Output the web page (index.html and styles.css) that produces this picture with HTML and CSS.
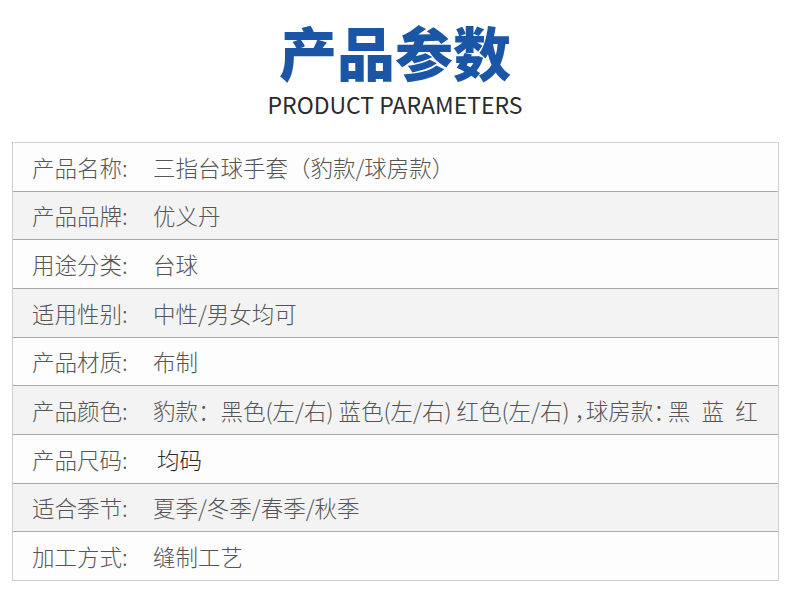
FILE: index.html
```html
<!DOCTYPE html>
<html lang="zh-CN">
<head>
<meta charset="utf-8">
<title>产品参数</title>
<link rel="stylesheet" href="styles.css">
</head>
<body>
<div class="page">
  <header class="heading">
    <h1 class="title">产品参数</h1>
    <p class="subtitle">PRODUCT PARAMETERS</p>
  </header>
  <div class="params">
    <div class="row"><span class="label">产品名称:</span><span class="value">三指台球手套（豹款/球房款）</span></div>
    <div class="row alt"><span class="label">产品品牌:</span><span class="value">优义丹</span></div>
    <div class="row"><span class="label">用途分类:</span><span class="value">台球</span></div>
    <div class="row alt"><span class="label">适用性别:</span><span class="value">中性/男女均可</span></div>
    <div class="row"><span class="label">产品材质:</span><span class="value">布制</span></div>
    <div class="row alt"><span class="label">产品颜色:</span><span class="value">豹款：黑色(左/右) 蓝色(左/右) 红色(左/右) <span class="half">，</span>球房款<span class="tight">：</span>黑&ensp;蓝&ensp;红</span></div>
    <div class="row"><span class="label">产品尺码:</span><span class="value dark">均码</span></div>
    <div class="row alt"><span class="label">适合季节:</span><span class="value">夏季/冬季/春季/秋季</span></div>
    <div class="row"><span class="label">加工方式:</span><span class="value">缝制工艺</span></div>
  </div>
</div>
</body>
</html>
```
FILE: styles.css
```css
html, body {
  margin: 0;
  padding: 0;
  background: #ffffff;
}

.page {
  width: 790px;
  height: 595px;
  font-family: "Noto Sans CJK SC", "Noto Sans", sans-serif;
}

.heading {
  display: flex;
  flex-direction: column;
  align-items: center;
  padding-top: 19px;
}

.title {
  margin: 0;
  font-size: 58px;
  line-height: 64px;
  font-weight: 900;
  color: #1a56a5;
  letter-spacing: 0;
}

.subtitle {
  margin: 6px 0 0 0;
  font-size: 23px;
  line-height: 30px;
  font-weight: 400;
  color: #2b2b2b;
}

.params {
  margin: 23px 12px 0 12px;
  width: 767px;
  border: 1px solid #cfcfcf;
  box-sizing: border-box;
  display: flex;
  flex-direction: column;
}

.row {
  display: flex;
  align-items: center;
  height: 48.67px;
  box-sizing: border-box;
  padding-left: 19px;
  background: #fdfdfd;
  border-top: 1px solid #a9a9a9;
  font-size: 22.5px;
  font-weight: 300;
  color: #555555;
  white-space: nowrap;
}

.row:first-child {
  border-top: none;
  height: 47.67px;
}

.row.alt {
  background: #f3f3f3;
}

.label {
  width: 121px;
  flex: none;
}

.half {
  font-feature-settings: "halt" 1;
}

.tight {
  letter-spacing: -8px;
}

.value.dark {
  color: #2a2a2a;
  padding-left: 4px;
}
```
